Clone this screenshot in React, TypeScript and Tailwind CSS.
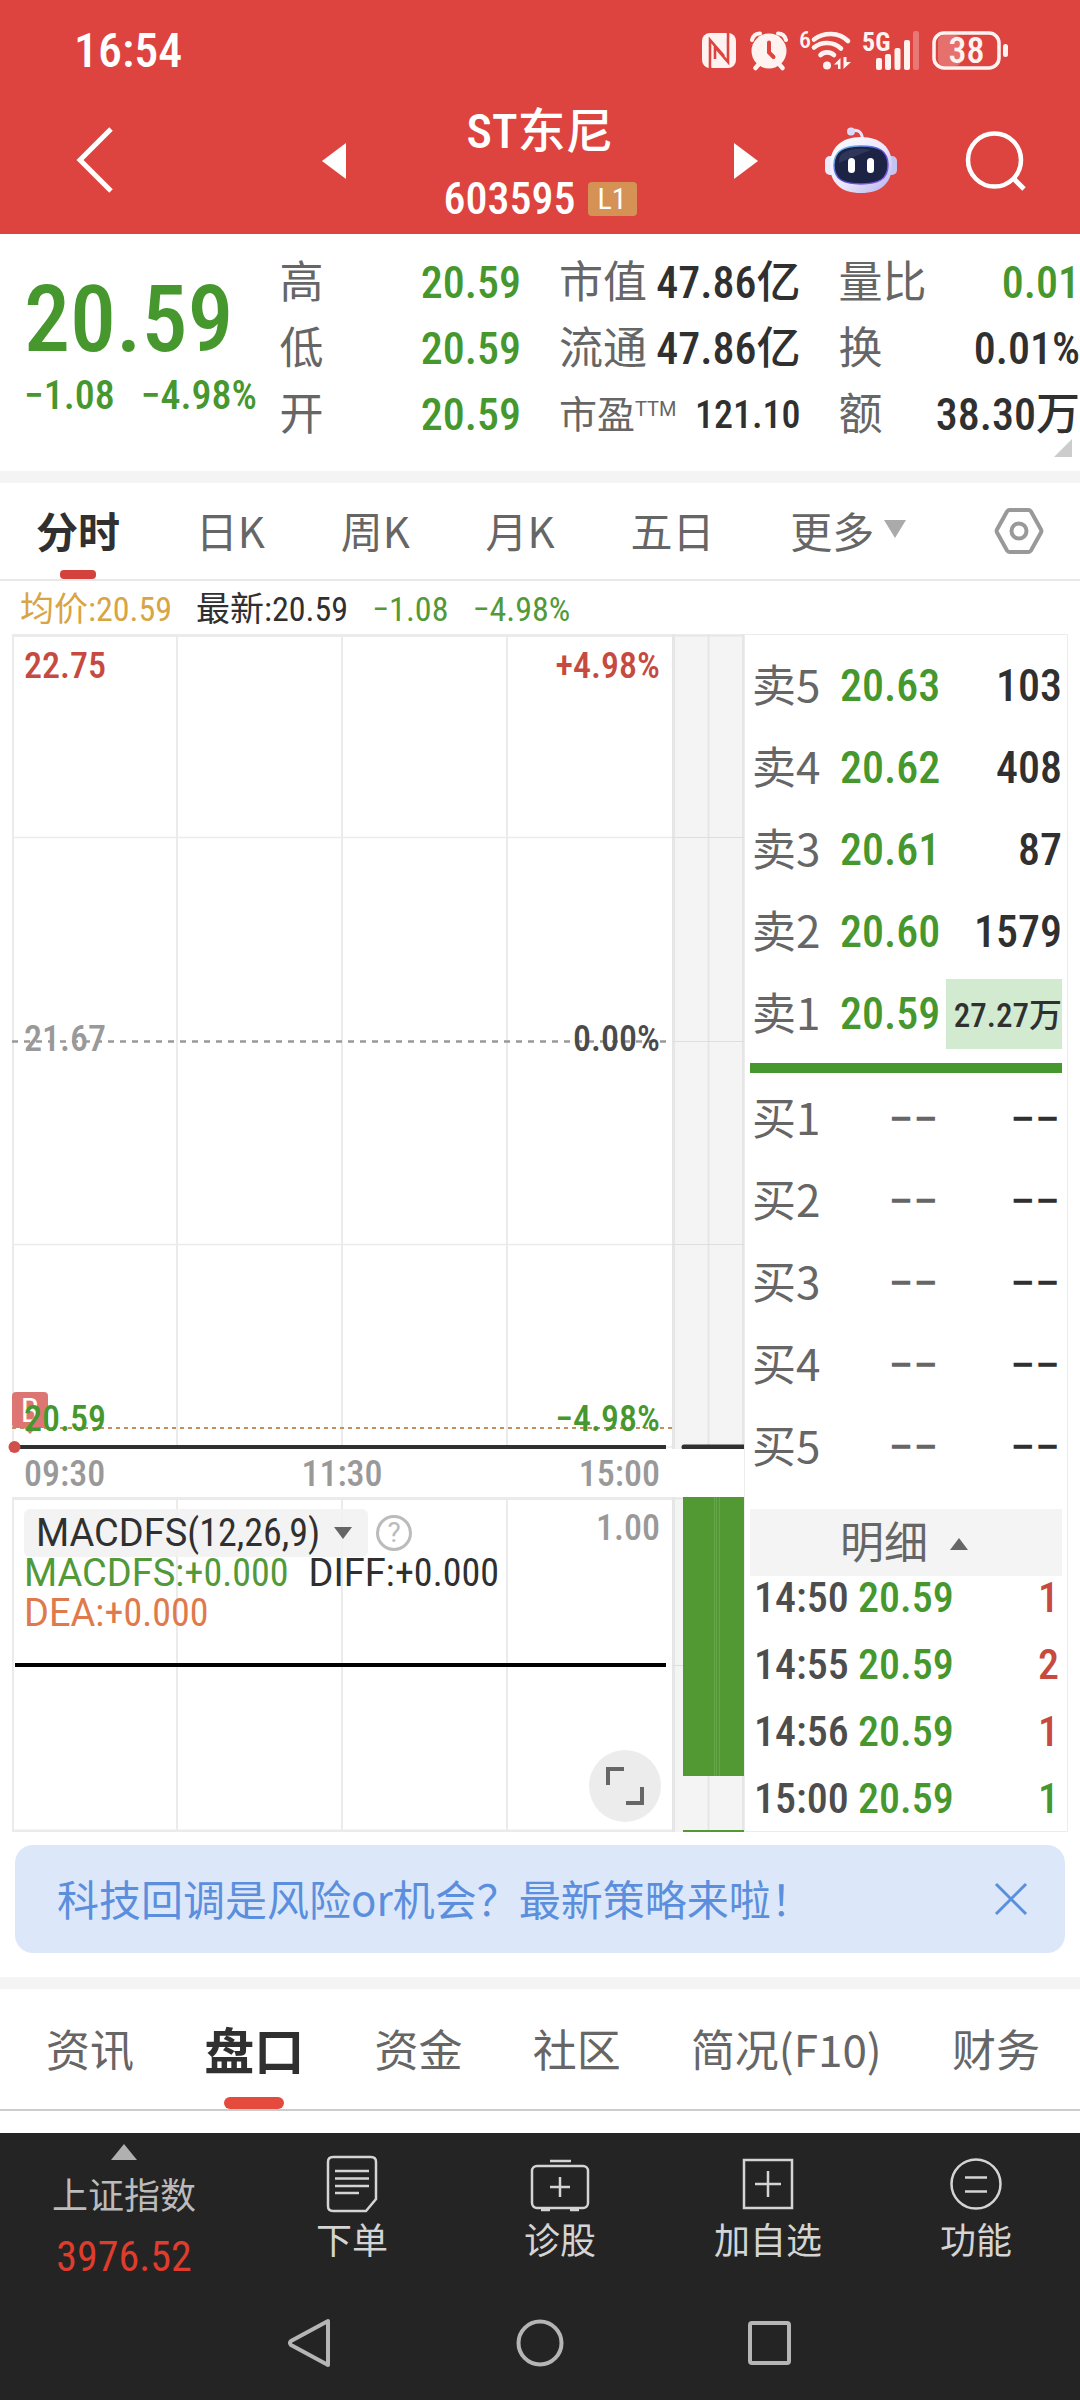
import { useState } from 'react'
import clsx from 'clsx'

const quoteColumns = [
    [
        { label: '高', value: '20.59', green: true },
        { label: '低', value: '20.59', green: true },
        { label: '开', value: '20.59', green: true },
    ],
    [
        { label: '市值', value: '47.86亿' },
        { label: '流通', value: '47.86亿' },
        { label: '市盈', note: 'TTM', value: '121.10', small: true },
    ],
    [
        { label: '量比', value: '0.01', green: true },
        { label: '换', value: '0.01%' },
        { label: '额', value: '38.30万' },
    ],
] as { label: string; value: string; note?: string; green?: boolean; small?: boolean }[][]

const sells = [
    { label: '卖5', price: '20.63', qty: '103' },
    { label: '卖4', price: '20.62', qty: '408' },
    { label: '卖3', price: '20.61', qty: '87' },
    { label: '卖2', price: '20.60', qty: '1579' },
    { label: '卖1', price: '20.59', qty: '27.27万', active: true },
]

const buys = ['买1', '买2', '买3', '买4', '买5']

const trades = [
    { time: '14:50', price: '20.59', qty: '1', up: true },
    { time: '14:55', price: '20.59', qty: '2', up: true },
    { time: '14:56', price: '20.59', qty: '1', up: true },
    { time: '15:00', price: '20.59', qty: '1', up: false },
]

const periods = ['分时', '日K', '周K', '月K', '五日']
const sections = ['资讯', '盘口', '资金', '社区', '简况(F10)', '财务']

function StatusBar() {
    return (
        <div className="flex h-[100px] items-center justify-between pl-[74px] pr-[70px] pt-0.5">
            <span className="text-[48px] font-medium leading-none text-white">16:54</span>
            <div className="flex items-center gap-3 text-[#fff3f2]">
                <svg width="36" height="40" viewBox="0 0 36 40" fill="none">
                    <rect x="0" y="2" width="34" height="35" rx="8" fill="currentColor" />
                    <path d="M8.500 39C7.500 36 8 34 8 30V9L22 25" stroke="#dd443f" strokeWidth="2.600" />
                    <path d="M25.500 0C26.500 3 26 5 26 9V31L13 16V28" stroke="#dd443f" strokeWidth="2.600" />
                </svg>
                <svg width="38" height="40" viewBox="0 0 38 40" fill="none" stroke="currentColor" strokeLinecap="round">
                    <path d="M2 9C3 5 6 2.500 10 2.500M28 2.500C32 2.500 35 5 36 9" strokeWidth="4" />
                    <path d="M9 33L5.500 37M29 33L32.500 37" strokeWidth="4.500" />
                    <circle cx="19" cy="20" r="17.500" fill="currentColor" stroke="none" />
                    <path d="M19 11.500V21.500L23.500 26" stroke="#dd443f" strokeWidth="4" />
                </svg>
                <svg className="overflow-visible" width="52" height="42" viewBox="0 0 52 42" fill="none">
                    <text x="-1" y="18" fontSize="24" fontWeight="500" fill="currentColor">6</text>
                    <g stroke="currentColor" strokeWidth="4.600" strokeLinecap="round">
                        <path d="M14 9.500C24 2 39 2 48 11" />
                        <path d="M14 17.500C21 11.500 33 11 41 18.500" />
                        <path d="M20.500 25C24 21.500 30 21.500 34 25" />
                    </g>
                    <circle cx="27" cy="35.500" r="4" fill="currentColor" />
                    <path d="M38 28V39H40.500V28L34 34.500H38M43.500 27V39L51 32H46.500V27Z" fill="currentColor" />
                </svg>
                <svg className="overflow-visible" width="56" height="42" viewBox="0 0 56 42" fill="currentColor">
                    <text x="-2" y="21" fontSize="26" fontWeight="700">5G</text>
                    <rect x="12" y="28" width="6" height="12" rx="2" />
                    <rect x="21" y="24" width="6" height="16" rx="2" />
                    <rect x="30.500" y="18" width="6" height="22" rx="2" />
                    <rect x="40" y="10" width="6" height="30" rx="2" />
                    <rect x="49" y="1" width="6" height="39" rx="2" opacity=".3" />
                </svg>
                <svg className="overflow-visible" width="78" height="40" viewBox="0 0 78 40" fill="none">
                    <rect x="6" y="4" width="23" height="31" rx="6" fill="currentColor" opacity=".25" />
                    <rect x="2" y="2" width="65" height="35" rx="10" stroke="currentColor" strokeWidth="3.500" />
                    <rect x="71" y="13" width="5" height="13" rx="2.500" fill="currentColor" />
                    <text x="34.500" y="32" fontSize="36" fontWeight="500" textAnchor="middle" fill="currentColor">38</text>
                </svg>
            </div>
        </div>
    )
}

function RobotIcon() {
    return (
        <svg width="72" height="68" viewBox="0 0 72 68" fill="none">
            <defs>
                <linearGradient id="shell" x1="0" y1="0" x2="1" y2="1">
                    <stop offset="0" stopColor="#ffffff" />
                    <stop offset=".55" stopColor="#e9e6fb" />
                    <stop offset="1" stopColor="#b3b0ee" />
                </linearGradient>
                <linearGradient id="rim" x1="0" y1="0" x2="1" y2="1">
                    <stop offset="0" stopColor="#6fd3f2" />
                    <stop offset=".5" stopColor="#5a4bd8" />
                    <stop offset="1" stopColor="#8d5bea" />
                </linearGradient>
            </defs>
            <path d="M27 4C33 2 37 5 37.500 12" stroke="#e8e4fa" strokeWidth="3" />
            <circle cx="26" cy="4.500" r="4" fill="#dcd9f8" />
            <rect x="0" y="29" width="12" height="19" rx="5" fill="#eceafb" />
            <rect x="60" y="29" width="12" height="19" rx="5" fill="#c5c3f2" />
            <path d="M36 10C56 10 67 21 67 38C67 56 56 66 36 66C16 66 5 56 5 38C5 21 16 10 36 10Z" fill="url(#shell)" />
            <path d="M36 19C54 19 63 24 63 38C63 52 54 57 36 57C18 57 9 52 9 38C9 24 18 19 36 19Z" fill="#1d2344" stroke="url(#rim)" strokeWidth="1.500" />
            <path d="M18 26C26 21 38 21 46 23C36 27 24 31 14 36C14 31 15 28 18 26Z" fill="#3a4268" opacity=".6" />
            <rect x="23" y="31" width="7" height="15" rx="3.500" fill="#fff" />
            <rect x="42" y="31" width="7" height="15" rx="3.500" fill="#fff" />
        </svg>
    )
}

function Header() {
    return (
        <header className="bg-[#dd443f] pb-[13px] text-white">
            <StatusBar />
            <div className="grid h-[121px] grid-cols-[1fr_436px_1fr] items-center">
                <button aria-label="返回" className="justify-self-start pl-[74px]">
                    <svg width="40" height="68" viewBox="0 0 40 68" fill="none" stroke="currentColor" strokeWidth="5">
                        <path d="M37 2L6 33L37 64" />
                    </svg>
                </button>
                <div className="flex items-center justify-between">
                    <button aria-label="上一只">
                        <svg width="24" height="36" viewBox="0 0 24 36" fill="currentColor"><path d="M24 0V36L0 18Z" /></svg>
                    </button>
                    <div className="flex flex-col items-center gap-[15px] pt-0.5">
                        <h1 className="text-[48px] font-medium leading-[60px]">ST东尼</h1>
                        <div className="flex h-11 items-center gap-3">
                            <span className="text-[44px] font-medium leading-none">603595</span>
                            <span className="flex h-[34px] w-[49px] items-center justify-center rounded-sm bg-[#d69254] text-[30px] leading-none">L1</span>
                        </div>
                    </div>
                    <button aria-label="下一只">
                        <svg width="24" height="36" viewBox="0 0 24 36" fill="currentColor"><path d="M0 0V36L24 18Z" /></svg>
                    </button>
                </div>
                <div className="flex items-center justify-end gap-[68px] pr-[53px]">
                    <button aria-label="智能助手"><RobotIcon /></button>
                    <button aria-label="搜索">
                        <svg width="62" height="62" viewBox="0 0 62 62" fill="none" stroke="currentColor" strokeWidth="4.500">
                            <circle cx="29.500" cy="30" r="26.500" />
                            <path d="M48 48L59 59" strokeWidth="5" />
                        </svg>
                    </button>
                </div>
            </div>
        </header>
    )
}

function Quote() {
    return (
        <section className="relative grid grid-cols-4 gap-[38px] overflow-hidden pb-[23px] pt-4">
            <div className="whitespace-nowrap pl-6 pt-6 text-[#46972e]">
                <div className="text-[92px] font-medium leading-[92px]">20.59</div>
                <div className="mt-2.5 flex gap-[26px] text-[40px] font-medium leading-[40px]">
                    <span>−1.08</span>
                    <span>−4.98%</span>
                </div>
            </div>
            {quoteColumns.map((rows, i) => (
                <dl key={i}>
                    {rows.map((row) => (
                        <div key={row.label} className={clsx('flex h-[66px] items-center justify-between whitespace-nowrap', row.small ? 'text-[38px]' : 'text-[44px]')}>
                            <dt className="flex items-center text-[#666]">
                                {row.label}
                                {row.note && <span className="pb-3 font-['Roboto'] text-[20px] leading-none">{row.note}</span>}
                            </dt>
                            <dd className={clsx('font-medium', row.green ? 'text-[#46972e]' : 'text-[#303030]')}>{row.value}</dd>
                        </div>
                    ))}
                </dl>
            ))}
            <svg className="absolute bottom-3.5 right-2" width="18" height="18" viewBox="0 0 18 18" fill="#ccc"><path d="M18 0V18H0Z" /></svg>
        </section>
    )
}

function PeriodTabs() {
    const [active, setActive] = useState('分时')

    return (
        <nav className="flex h-[98px] items-stretch justify-between border-b-2 border-[#e8e8e8] px-9 font-['Noto_Sans_CJK_SC',sans-serif] text-[42px] text-[#666]">
            {periods.map((p) => (
                <button key={p} onClick={() => setActive(p)} className={clsx('relative pb-1', active === p && 'font-bold text-[#303030]')}>
                    {p}
                    {active === p && <span className="absolute bottom-0 left-1/2 h-[9px] w-9 -translate-x-1/2 rounded bg-[#d3423c]" />}
                </button>
            ))}
            <button className="flex items-center gap-2.5 pb-1 pr-3">
                更多
                <svg width="22" height="18" viewBox="0 0 22 18" fill="#aaa"><path d="M0 0H22L11 18Z" /></svg>
            </button>
            <button aria-label="设置">
                <svg width="50" height="48" viewBox="0 0 50 48" fill="none" stroke="#999" strokeWidth="4">
                    <path d="M15.500 3H34.500Q36 3 37 4.500L47 22.500Q47.800 24 47 25.500L37 43.500Q36 45 34.500 45H15.500Q14 45 13 43.500L3 25.500Q2.200 24 3 22.500L13 4.500Q14 3 15.500 3Z" />
                    <circle cx="25" cy="24" r="7.500" />
                </svg>
            </button>
        </nav>
    )
}

function PriceChart() {
    return (
        <div className="relative h-[815px]">
            <svg className="absolute inset-0 h-full w-full" viewBox="0 0 660 815" preserveAspectRatio="none" fill="none">
                <g stroke="#ebebeb" strokeWidth="2">
                    <path d="M0 1.500H660" strokeWidth="3" />
                    <path d="M1 0V815M165 0V815M330 0V815M495 0V815" />
                    <path d="M0 203.500H660M0 610.500H660M0 813H660" strokeWidth="1.500" />
                </g>
                <path d="M0 407.500H656" stroke="#999" strokeWidth="2.500" strokeDasharray="6 6" />
                <path d="M0 794H660" stroke="#c68f5e" strokeWidth="2" strokeDasharray="4 4" />
            </svg>
            <div className="absolute left-0 top-[758px] flex h-9 w-9 items-center justify-center rounded-sm bg-[#dd7672] text-[34px] leading-none text-white">
                B
                <svg className="absolute left-3 top-9" width="12" height="6" viewBox="0 0 12 6" fill="#dd7672"><path d="M0 0H12L6 6Z" /></svg>
            </div>
            <svg className="absolute inset-0 h-full w-full overflow-visible" viewBox="0 0 660 815" preserveAspectRatio="none">
                <path d="M3 813H654" stroke="#303030" strokeWidth="4" />
                <circle cx="2.500" cy="813" r="6" fill="#d2504a" />
            </svg>
            <div className="absolute inset-0 flex flex-col justify-between px-3 pb-3 pt-3.5 text-4xl font-medium leading-[36px]">
                <div className="flex justify-between text-[#c64a40]"><span>22.75</span><span>+4.98%</span></div>
                <div className="flex justify-between pb-2 text-[#999]"><span>21.67</span><span className="text-[#4a4a4a]">0.00%</span></div>
                <div className="flex justify-between text-[#46972e]"><span>20.59</span><span>−4.98%</span></div>
            </div>
        </div>
    )
}

function AfterHoursStrip() {
    return (
        <svg className="h-[815px] w-full" viewBox="0 0 72 815" preserveAspectRatio="none" fill="none">
            <rect width="72" height="815" fill="#f4f4f4" />
            <path d="M0 0V815" stroke="#e6e6e6" strokeWidth="6" />
            <path d="M0 1.500H72M36.500 0V815M71 0V815" stroke="#e6e6e6" strokeWidth="2" />
            <path d="M0 203.500H72M0 407.500H72M0 610.500H72" stroke="#dedede" />
            <path d="M12 813H72" stroke="#303030" strokeWidth="5" strokeLinecap="round" />
        </svg>
    )
}

function MacdChart() {
    return (
        <div className="relative h-[335px]">
            <svg className="absolute inset-0 h-full w-full" viewBox="0 0 660 335" preserveAspectRatio="none" fill="none">
                <path d="M0 1.500H660M0 334H660" stroke="#ebebeb" strokeWidth="3" />
                <path d="M1 0V335M165 0V335M330 0V335M495 0V335" stroke="#ebebeb" strokeWidth="2" />
                <path d="M3 168H654" stroke="#000" strokeWidth="4" />
            </svg>
            <div className="relative flex justify-between px-3 pt-3">
                <div className="font-['Roboto','Noto_Sans_CJK_SC',sans-serif] text-[38px]">
                    <div className="flex items-center gap-2">
                        <button className="flex h-12 items-center gap-3.5 rounded-md bg-[#f2f2f2]/90 pl-3 pr-4 text-[#303030]">
                            <span>MACDFS<span className="font-['Roboto_Condensed']">(12,26,9)</span></span>
                            <svg width="18" height="12" viewBox="0 0 18 12" fill="#666"><path d="M0 0H18L9 12Z" /></svg>
                        </button>
                        <button aria-label="指标说明" className="flex h-9 w-9 items-center justify-center rounded-full border-[3px] border-[#bbb] text-[28px] leading-none text-[#bbb]">?</button>
                    </div>
                    <div className="-mt-1 flex gap-5 leading-[40px]">
                        <span className="text-[#52993a]">MACDFS:<span className="font-['Roboto_Condensed']">+0.000</span></span>
                        <span className="text-[#303030]">DIFF:<span className="font-['Roboto_Condensed']">+0.000</span></span>
                    </div>
                    <div className="leading-[40px] text-[#df7a4c]">DEA:<span className="font-['Roboto_Condensed']">+0.000</span></div>
                </div>
                <span className="pt-px text-4xl font-medium leading-[36px] text-[#999]">1.00</span>
            </div>
            <button aria-label="全屏" className="absolute bottom-2.5 right-[11px] flex h-[72px] w-[72px] items-center justify-center rounded-full bg-[#ececec]">
                <svg width="38" height="38" viewBox="0 0 38 38" fill="none" stroke="#666" strokeWidth="4">
                    <path d="M2 18V2H18M36 20V36H20" />
                </svg>
            </button>
        </div>
    )
}

function VolumeStrip() {
    return (
        <svg className="h-[335px] w-full" viewBox="0 0 72 335" preserveAspectRatio="none" fill="none">
            <rect width="72" height="335" fill="#f4f4f4" />
            <path d="M0 0V335" stroke="#e6e6e6" strokeWidth="6" />
            <path d="M0 1.500H72M36.500 0V335M71 0V335" stroke="#e6e6e6" strokeWidth="2" />
            <path d="M0 168.500H72" stroke="#dedede" />
            <rect x="11" width="61" height="279" fill="#529933" />
            <path d="M42.500 0V279M44.500 0V279M47.500 0V279" stroke="#6dab52" strokeWidth=".8" />
            <path d="M11 334H72" stroke="#529933" strokeWidth="2" />
        </svg>
    )
}

function OrderBook() {
    return (
        <aside className="flex flex-col border border-[#ececec] px-[5px] pt-2.5">
            <table className="w-full table-fixed text-[44px]">
                <colgroup>
                    <col className="w-[24%]" />
                    <col className="w-[37%]" />
                    <col className="w-[39%]" />
                </colgroup>
                <tbody>
                    {sells.map((row) => (
                        <tr key={row.label} className="h-[82px]">
                            <th className="whitespace-nowrap p-0 pb-1.5 pl-0.5 text-left font-['Noto_Sans_CJK_SC',sans-serif] font-normal leading-[60px] text-[#666]">{row.label}</th>
                            <td className="p-0 text-right font-medium text-[#46972e]">{row.price}</td>
                            <td className="p-0 pl-1.5 text-right font-medium text-[#303030]">
                                {row.active ? (
                                    <div className="flex h-[70px] items-center justify-end bg-[#d2ead0] pt-1 text-[33px]">{row.qty}</div>
                                ) : row.qty}
                            </td>
                        </tr>
                    ))}
                </tbody>
            </table>
            <div className="mb-[5px] mt-2 h-2.5 bg-[#46972e]" />
            <table className="w-full table-fixed text-[44px]">
                <colgroup>
                    <col className="w-[24%]" />
                    <col className="w-[37%]" />
                    <col className="w-[39%]" />
                </colgroup>
                <tbody>
                    {buys.map((label) => (
                        <tr key={label} className="h-[82px]">
                            <th className="whitespace-nowrap p-0 pb-1.5 pl-0.5 text-left font-['Noto_Sans_CJK_SC',sans-serif] font-normal leading-[60px] text-[#666]">{label}</th>
                            <td className="p-0 pr-0.5 text-right font-['Roboto'] font-medium text-[#666]">−−</td>
                            <td className="p-0 pr-0.5 text-right font-['Roboto'] font-medium text-[#303030]">−−</td>
                        </tr>
                    ))}
                </tbody>
            </table>
            <button className="mt-[21px] flex h-[67px] items-center justify-center gap-[22px] bg-[#f4f4f4] pr-1 pt-0.5 text-[44px] leading-none text-[#666]">
                明细
                <svg width="18" height="12" viewBox="0 0 18 12" fill="#666"><path d="M0 12H18L9 0Z" /></svg>
            </button>
            <table className="w-full text-[42px] font-medium leading-[42px]">
                <tbody>
                    {trades.map((t) => (
                        <tr key={t.time} className="h-[67px] align-bottom first:h-[54px]">
                            <td className="w-[108px] p-0 pb-[11px] pl-1 text-[#4d4d4d]">{t.time}</td>
                            <td className="p-0 pb-[11px] text-[#46972e]">{t.price}</td>
                            <td className={clsx('p-0 pb-[11px] pr-[3px] text-right', t.up ? 'text-[#c64a40]' : 'text-[#46972e]')}>{t.qty}</td>
                        </tr>
                    ))}
                </tbody>
            </table>
        </aside>
    )
}

function SectionTabs() {
    const [active, setActive] = useState('盘口')

    return (
        <nav className="flex h-[122px] items-stretch justify-between whitespace-nowrap border-b-2 border-[#ccc] pl-[46px] pr-10 font-['Noto_Sans_CJK_SC',sans-serif] text-[44px] text-[#666]">
            {sections.map((s) => (
                <button key={s} onClick={() => setActive(s)} className={clsx('relative pb-0.5', active === s && 'text-[50px] font-bold text-[#303030]')}>
                    {s}
                    {active === s && <span className="absolute bottom-0 left-1/2 h-3 w-[60px] -translate-x-1/2 rounded-md bg-[#e54b3c]" />}
                </button>
            ))}
        </nav>
    )
}

const actions = [
    {
        label: '下单',
        icon: (
            <>
                <path d="M13 5H51Q56 5 56 10V47L46 59H13Q8 59 8 54V10Q8 5 13 5Z" />
                <path d="M15 19H49M15 26.500H49M15 34H49M15 41H39" />
            </>
        ),
    },
    {
        label: '诊股',
        icon: (
            <>
                <rect x="4" y="14" width="56" height="42" rx="5" />
                <path d="M22 9H43M32 25V45M22 35H42M13 58H22M42 58H51" />
            </>
        ),
    },
    {
        label: '加自选',
        icon: (
            <>
                <rect x="8" y="8" width="48" height="48" />
                <path d="M32 19V45M19 32H45" />
            </>
        ),
    },
    {
        label: '功能',
        icon: (
            <>
                <circle cx="32" cy="32" r="24.500" />
                <path d="M21 25.500H43M21 39.500H43" />
            </>
        ),
    },
]

function BottomBar() {
    return (
        <footer className="bg-[#242424] text-[#d4d4d4]">
            <div className="grid h-[165px] grid-cols-[248fr_208fr_208fr_208fr_208fr] text-4xl">
                <button className="flex flex-col items-center pt-[11px] text-[#bbb]">
                    <svg width="26" height="16" viewBox="0 0 26 16" fill="#b0b0b0"><path d="M0 16H26L13 0Z" /></svg>
                    <span className="mt-[17px] leading-[40px]">上证指数</span>
                    <span className="mt-[19px] text-[42px] leading-[42px] text-[#de3c2c]">3976.52</span>
                </button>
                {actions.map((a) => (
                    <button key={a.label} className="flex flex-col items-center pt-[19px]">
                        <svg width="64" height="64" viewBox="0 0 64 64" fill="none" stroke="currentColor" strokeWidth="2.500">{a.icon}</svg>
                        <span className="mt-1.5 leading-[40px]">{a.label}</span>
                    </button>
                ))}
            </div>
            <div className="flex h-[102px] items-center justify-center gap-[166px] pb-3">
                <button aria-label="后退">
                    <svg width="64" height="64" viewBox="0 0 64 64" fill="none" stroke="#b5b5b5" strokeWidth="4" strokeLinejoin="round">
                        <path d="M50 10V54L13 34Q11 32 13 30Z" />
                    </svg>
                </button>
                <button aria-label="主屏幕">
                    <svg width="64" height="64" viewBox="0 0 64 64" fill="none" stroke="#b5b5b5" strokeWidth="4"><circle cx="32" cy="32" r="21.500" /></svg>
                </button>
                <button aria-label="最近任务">
                    <svg width="64" height="64" viewBox="0 0 64 64" fill="none" stroke="#b5b5b5" strokeWidth="4"><rect x="12" y="12" width="39" height="40" rx="2" /></svg>
                </button>
            </div>
        </footer>
    )
}

export default function App() {
    return (
        <div className="flex min-h-screen flex-col bg-white font-['Roboto_Condensed','Noto_Sans_CJK_SC',sans-serif]">
            <Header />
            <Quote />
            <div className="h-3 bg-[#f4f4f4]" />
            <PeriodTabs />

            <div className="flex h-[53px] items-center gap-6 px-5 pt-1 text-[34px] text-[#303030]">
                <span className="text-[#d8a545]">均价:20.59</span>
                <span>最新:20.59</span>
                <span className="text-[#52993a]">−1.08</span>
                <span className="text-[#52993a]">−4.98%</span>
            </div>

            <main className="mx-3 grid grid-cols-[732fr_324fr]">
                <div>
                    <div className="grid grid-cols-[660fr_72fr]">
                        <PriceChart />
                        <AfterHoursStrip />
                    </div>
                    <div className="grid h-12 grid-cols-[660fr_72fr] items-center pt-0.5 text-4xl font-medium text-[#999]">
                        <div className="flex justify-between px-3">
                            <span>09:30</span>
                            <span>11:30</span>
                            <span>15:00</span>
                        </div>
                    </div>
                    <div className="grid grid-cols-[660fr_72fr]">
                        <MacdChart />
                        <VolumeStrip />
                    </div>
                </div>
                <OrderBook />
            </main>

            <div className="mx-[15px] mt-[13px] flex h-[108px] items-center justify-between rounded-[18px] bg-[#dce8fa] pl-[42px] pr-[37px] text-[#5b8fdd]">
                <a href="#strategy" className="pb-1 font-['Noto_Sans_CJK_SC',sans-serif] text-[42px]">科技回调是风险or机会？最新策略来啦！</a>
                <button aria-label="关闭">
                    <svg width="34" height="34" viewBox="0 0 34 34" fill="none" stroke="currentColor" strokeWidth="3"><path d="M2 2L32 32M32 2L2 32" /></svg>
                </button>
            </div>

            <div className="mt-6 h-3 bg-[#f4f4f4]" />
            <SectionTabs />
            <div className="min-h-[20px] flex-1" />
            <BottomBar />
        </div>
    )
}
